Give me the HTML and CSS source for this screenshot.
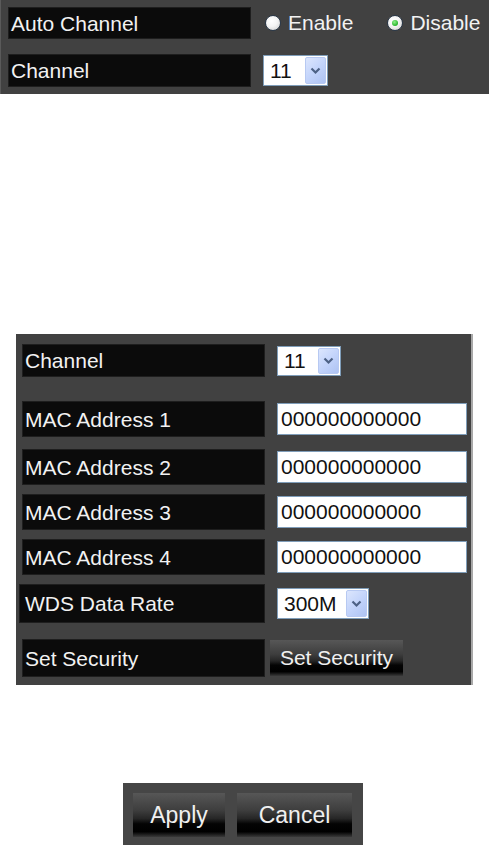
FILE: index.html
```html
<!DOCTYPE html>
<html lang="en">

<head>
    <meta charset="UTF-8">
    <meta name="viewport" content="width=device-width, initial-scale=1.0">
    <title>Wireless Settings</title>
    <link rel="stylesheet" href="styles.css">
</head>

<body>
    <div class="panel panel-top">
        <div class="row">
            <div class="label">Auto Channel</div>
            <label class="radio"><span class="radio-dot"></span>Enable</label>
            <label class="radio radio-second"><span class="radio-dot checked"></span>Disable</label>
        </div>
        <div class="row row-channel">
            <div class="label">Channel</div>
            <span class="select select-top">
                <span class="select-value">11</span>
                <span class="select-btn"><svg width="11" height="8" viewBox="0 0 11 8"><path d="M1.5 1.5 L5.5 5.5 L9.5 1.5" fill="none" stroke="#4d6185" stroke-width="2.2"/></svg></span>
            </span>
        </div>
    </div>

    <div class="panel panel-wds">
        <div class="row r-channel">
            <div class="label">Channel</div>
            <span class="select select-ch">
                <span class="select-value">11</span>
                <span class="select-btn"><svg width="11" height="8" viewBox="0 0 11 8"><path d="M1.5 1.5 L5.5 5.5 L9.5 1.5" fill="none" stroke="#4d6185" stroke-width="2.2"/></svg></span>
            </span>
        </div>
        <div class="row r-mac1">
            <div class="label tall">MAC Address 1</div>
            <input class="mac" type="text" value="000000000000">
        </div>
        <div class="row r-mac">
            <div class="label tall">MAC Address 2</div>
            <input class="mac" type="text" value="000000000000">
        </div>
        <div class="row r-mac">
            <div class="label tall">MAC Address 3</div>
            <input class="mac" type="text" value="000000000000">
        </div>
        <div class="row r-mac">
            <div class="label tall">MAC Address 4</div>
            <input class="mac" type="text" value="000000000000">
        </div>
        <div class="row r-rate">
            <div class="label label-rate">WDS Data Rate</div>
            <span class="select select-rate">
                <span class="select-value">300M</span>
                <span class="select-btn"><svg width="11" height="8" viewBox="0 0 11 8"><path d="M1.5 1.5 L5.5 5.5 L9.5 1.5" fill="none" stroke="#4d6185" stroke-width="2.2"/></svg></span>
            </span>
        </div>
        <div class="row r-sec">
            <div class="label label-sec">Set Security</div>
            <button class="btn btn-sec" type="button">Set Security</button>
        </div>
    </div>

    <div class="actions">
        <button class="btn btn-apply" type="button">Apply</button>
        <button class="btn btn-cancel" type="button">Cancel</button>
    </div>
</body>

</html>
```

FILE: styles.css
```css
body {
    margin: 0;
    padding: 0;
    background: #ffffff;
    font-family: "Liberation Sans", Arial, sans-serif;
    font-size: 21px;
    color: #f2f2f2;
}

.panel {
    background: #414141;
    box-sizing: border-box;
}

.panel-top {
    height: 94px;
    padding: 7px 0 0 8px;
    border-left: 1px solid #5a5a5a;
    padding-left: 7px;
}

.row {
    display: flex;
    align-items: center;
}

.label {
    box-sizing: border-box;
    width: 243px;
    height: 32px;
    background: #0b0b0b;
    border: 1px solid #1e1e1e;
    padding-left: 2px;
    line-height: 31px;
    color: #f2f2f2;
    flex-shrink: 0;
}

.label.tall {
    height: 36px;
    line-height: 35px;
}

.radio {
    display: flex;
    align-items: center;
    margin-left: 14px;
    margin-top: -1px;
}

.radio-second {
    margin-left: 34px;
}

.radio-dot {
    box-sizing: border-box;
    width: 16px;
    height: 16px;
    border-radius: 50%;
    margin-right: 7px;
    background: radial-gradient(circle at 40% 35%, #ffffff 0%, #f4f4f4 45%, #c9c9c9 100%);
    border: 1px solid #2c3a4a;
    display: flex;
    align-items: center;
    justify-content: center;
}

.radio-dot.checked::after {
    content: "";
    width: 6px;
    height: 6px;
    border-radius: 50%;
    background: radial-gradient(circle at 40% 35%, #8ef08a 0%, #26b42a 70%, #168c1c 100%);
}

.row-channel {
    margin-top: 15px;
}

.row-channel .label {
    height: 33px;
    line-height: 32px;
}

.select {
    box-sizing: border-box;
    display: flex;
    align-items: center;
    justify-content: space-between;
    background: #ffffff;
    border: 1px solid #7f9db9;
    color: #111111;
    padding: 1px 1px 1px 6px;
}

.select-value {
    line-height: 1;
}

.select-btn {
    box-sizing: border-box;
    width: 21px;
    height: 100%;
    display: flex;
    align-items: center;
    justify-content: center;
    background: linear-gradient(135deg, #dce6fd 0%, #c3d4fb 50%, #aec3f3 100%);
    border: 1px solid #b7c9f2;
    border-radius: 2px;
}

.select-top {
    width: 65px;
    height: 31px;
    margin-left: 12px;
}

.panel-wds {
    margin: 240px 0 0 16px;
    width: 457px;
    height: 351px;
    padding: 10px 0 0 6px;
    border-right: 2px solid #a8a8a8;
}

.r-channel .label {
    height: 33px;
    line-height: 32px;
}

.select-ch {
    width: 64px;
    height: 30px;
    margin-left: 12px;
}

.r-mac1 {
    margin-top: 24px;
}

.r-mac {
    margin-top: 12px;
}

.r-mac + .r-mac {
    margin-top: 9px;
}

.mac {
    box-sizing: border-box;
    width: 190px;
    height: 32px;
    margin-left: 12px;
    border: 1px solid #7f9db9;
    padding: 0 0 0 3px;
    font-family: "Liberation Sans", Arial, sans-serif;
    font-size: 21px;
    color: #111111;
    outline: none;
}

.r-rate {
    margin-top: 9px;
}

.label-rate {
    width: 246px;
    height: 39px;
    line-height: 38px;
    margin-left: -3px;
    padding-left: 5px;
}

.select-rate {
    width: 92px;
    height: 31px;
    margin-left: 12px;
}

.r-sec {
    margin-top: 16px;
}

.label-sec {
    height: 38px;
    line-height: 37px;
}

.btn {
    box-sizing: border-box;
    border: none;
    padding: 0;
    font-family: "Liberation Sans", Arial, sans-serif;
    color: #f0f0f0;
    cursor: pointer;
    background: linear-gradient(#575757 0%, #3d3d3d 40%, #262626 58%, #040404 70%, #000000 88%, #3a3a3a 100%);
}

.btn-sec {
    width: 133px;
    height: 36px;
    margin-left: 5px;
    font-size: 21px;
}

.actions {
    box-sizing: border-box;
    margin: 98px 0 0 123px;
    width: 240px;
    height: 62px;
    background: #464646;
    padding: 10px 0 0 10px;
    display: flex;
    gap: 12px;
}

.btn-apply,
.btn-cancel {
    height: 44px;
    font-size: 23px;
}

.btn-apply {
    width: 92px;
}

.btn-cancel {
    width: 115px;
}
```
